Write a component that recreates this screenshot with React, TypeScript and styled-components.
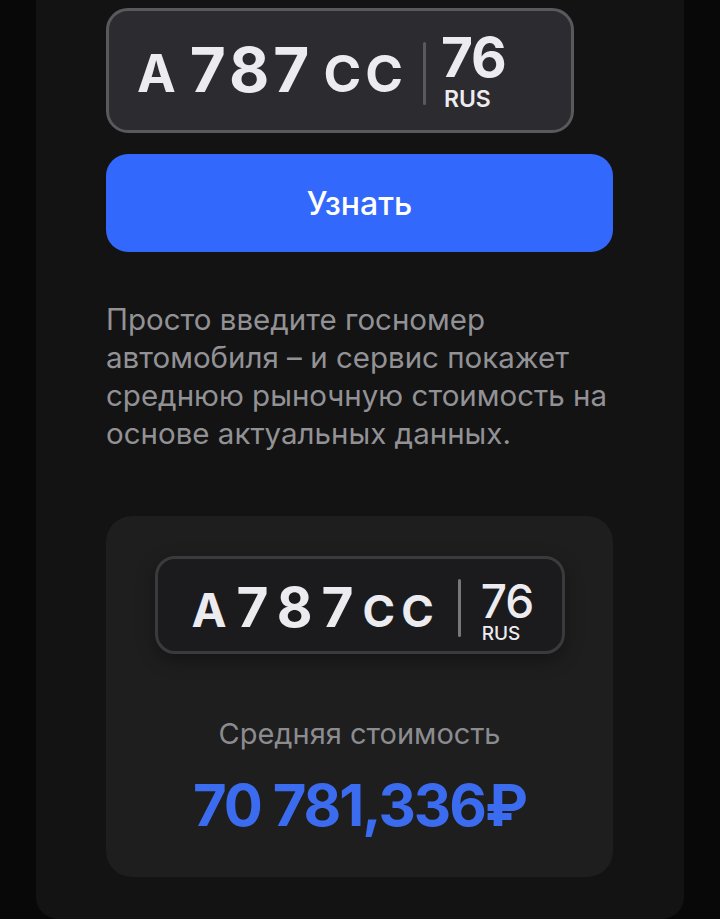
import { createGlobalStyle, css } from "styled-components";
import styled from "styled-components";

type Variant = "input" | "result";

const GlobalStyle = createGlobalStyle`
  html, body {
    margin:0;
    padding:0;
    background:#080808;
  }
  body {
    font-family: Inter, "Noto Sans", sans-serif;
    -webkit-font-smoothing: antialiased;
  }
`;

const Page = styled.div`
  display:flex;
  justify-content:center;
  min-height:919px;
  background:#080808;
`;

const Column = styled.main`
  box-sizing:border-box;
  width:648px;
  min-height:919px;
  padding:8px 71px 40px 70px;
  background:#131313;
  border-radius:0 0 22px 22px;
  display:flex;
  flex-direction:column;
`;

const PlateBox = styled.div<{ $variant: Variant }>`
  box-sizing:border-box;
  display:flex;
  align-items:center;
  color:#ececf0;
  ${(p) =>
    p.$variant === "input"
      ? css`
          width:468px;
          height:125px;
          padding-left:28px;
          background:#2c2b30;
          border:3px solid #59585d;
          border-radius:22px;
        `
      : css`
          align-self:center;
          width:410px;
          height:98px;
          padding-left:34px;
          background:#1b1b1d;
          border:3px solid #3a3a3c;
          border-radius:20px;
          box-shadow:0 6px 18px rgba(0,0,0,0.35);
        `}
`;

const Number = styled.div<{ $variant: Variant }>`
  display:flex;
  align-items:baseline;
  font-weight:700;
  line-height:1;
  margin-top:${(p) => (p.$variant === "input" ? "-1px" : "4px")};
`;

const Glyphs = styled.span<{ $size: number; $spacing: number; $gap?: number }>`
  font-size:${(p) => p.$size}px;
  letter-spacing:${(p) => p.$spacing}px;
  margin-left:${(p) => p.$gap ?? 0}px;
`;

const Divider = styled.div<{ $variant: Variant }>`
  flex:none;
  width:3px;
  border-radius:2px;
  ${(p) =>
    p.$variant === "input"
      ? css`
          height:63px;
          margin:6px 0 0 16px;
          background:#5a5a5e;
        `
      : css`
          height:58px;
          margin:6px 0 0 18px;
          background:#77777a;
        `}
`;

const Region = styled.div<{ $variant: Variant }>`
  display:flex;
  flex-direction:column;
  line-height:1;
  ${(p) =>
    p.$variant === "input"
      ? css`
          margin-left:15px;
        `
      : css`
          margin:10px 0 0 20px;
        `}
`;

const RegionCode = styled.span<{ $variant: Variant }>`
  font-size:${(p) => (p.$variant === "input" ? "55px" : "46px")};
  font-weight:${(p) => (p.$variant === "input" ? 700 : 500)};
  letter-spacing:-1px;
`;

const Country = styled.span<{ $variant: Variant }>`
  font-size:${(p) => (p.$variant === "input" ? "23px" : "19px")};
  font-weight:${(p) => (p.$variant === "input" ? 600 : 500)};
  margin:${(p) => (p.$variant === "input" ? "3px 0 0 3px" : "0 0 0 1px")};
`;

const Button = styled.button`
  box-sizing:border-box;
  width:100%;
  height:98px;
  margin-top:21px;
  border:none;
  border-radius:22px;
  background:#3268fb;
  color:#ffffff;
  font-family:inherit;
  font-size:32px;
  font-weight:500;
  cursor:pointer;
`;

const Description = styled.p`
  margin:48px 0 0;
  color:#929296;
  font-size:29.5px;
  line-height:38px;
`;

const ResultCard = styled.section`
  box-sizing:border-box;
  display:flex;
  flex-direction:column;
  align-items:center;
  margin-top:64px;
  padding:40px 0 37px;
  background:#1e1e1f;
  border-radius:26px;
`;

const Caption = styled.div`
  margin-top:62px;
  color:#8c8c90;
  font-size:29px;
  line-height:36px;
`;

const Price = styled.div`
  margin-top:18px;
  color:#3b6cf0;
  font-size:58px;
  font-weight:700;
  line-height:70px;
  letter-spacing:-2px;
`;

function Plate({ variant }: { variant: Variant }) {
  const input = variant === "input";
  return (
    <PlateBox $variant={variant}>
      <Number $variant={variant}>
        <Glyphs $size={input ? 52 : 47} $spacing={0}>
          A
        </Glyphs>
        <Glyphs $size={input ? 62 : 55} $spacing={input ? 4 : 9} $gap={input ? 14 : 10}>
          787
        </Glyphs>
        <Glyphs $size={input ? 51 : 44} $spacing={input ? 4 : 6} $gap={input ? 10 : 0}>
          CC
        </Glyphs>
      </Number>
      <Divider $variant={variant} />
      <Region $variant={variant}>
        <RegionCode $variant={variant}>76</RegionCode>
        <Country $variant={variant}>RUS</Country>
      </Region>
    </PlateBox>
  );
}

export default function App() {
  return (
    <>
      <GlobalStyle />
      <Page>
        <Column>
          <Plate variant="input" />
          <Button>Узнать</Button>
          <Description>
            Просто введите госномер
            <br />
            автомобиля – и сервис покажет
            <br />
            среднюю рыночную стоимость на
            <br />
            основе актуальных данных.
          </Description>
          <ResultCard>
            <Plate variant="result" />
            <Caption>Средняя стоимость</Caption>
            <Price>70 781,336₽</Price>
          </ResultCard>
        </Column>
      </Page>
    </>
  );
}
